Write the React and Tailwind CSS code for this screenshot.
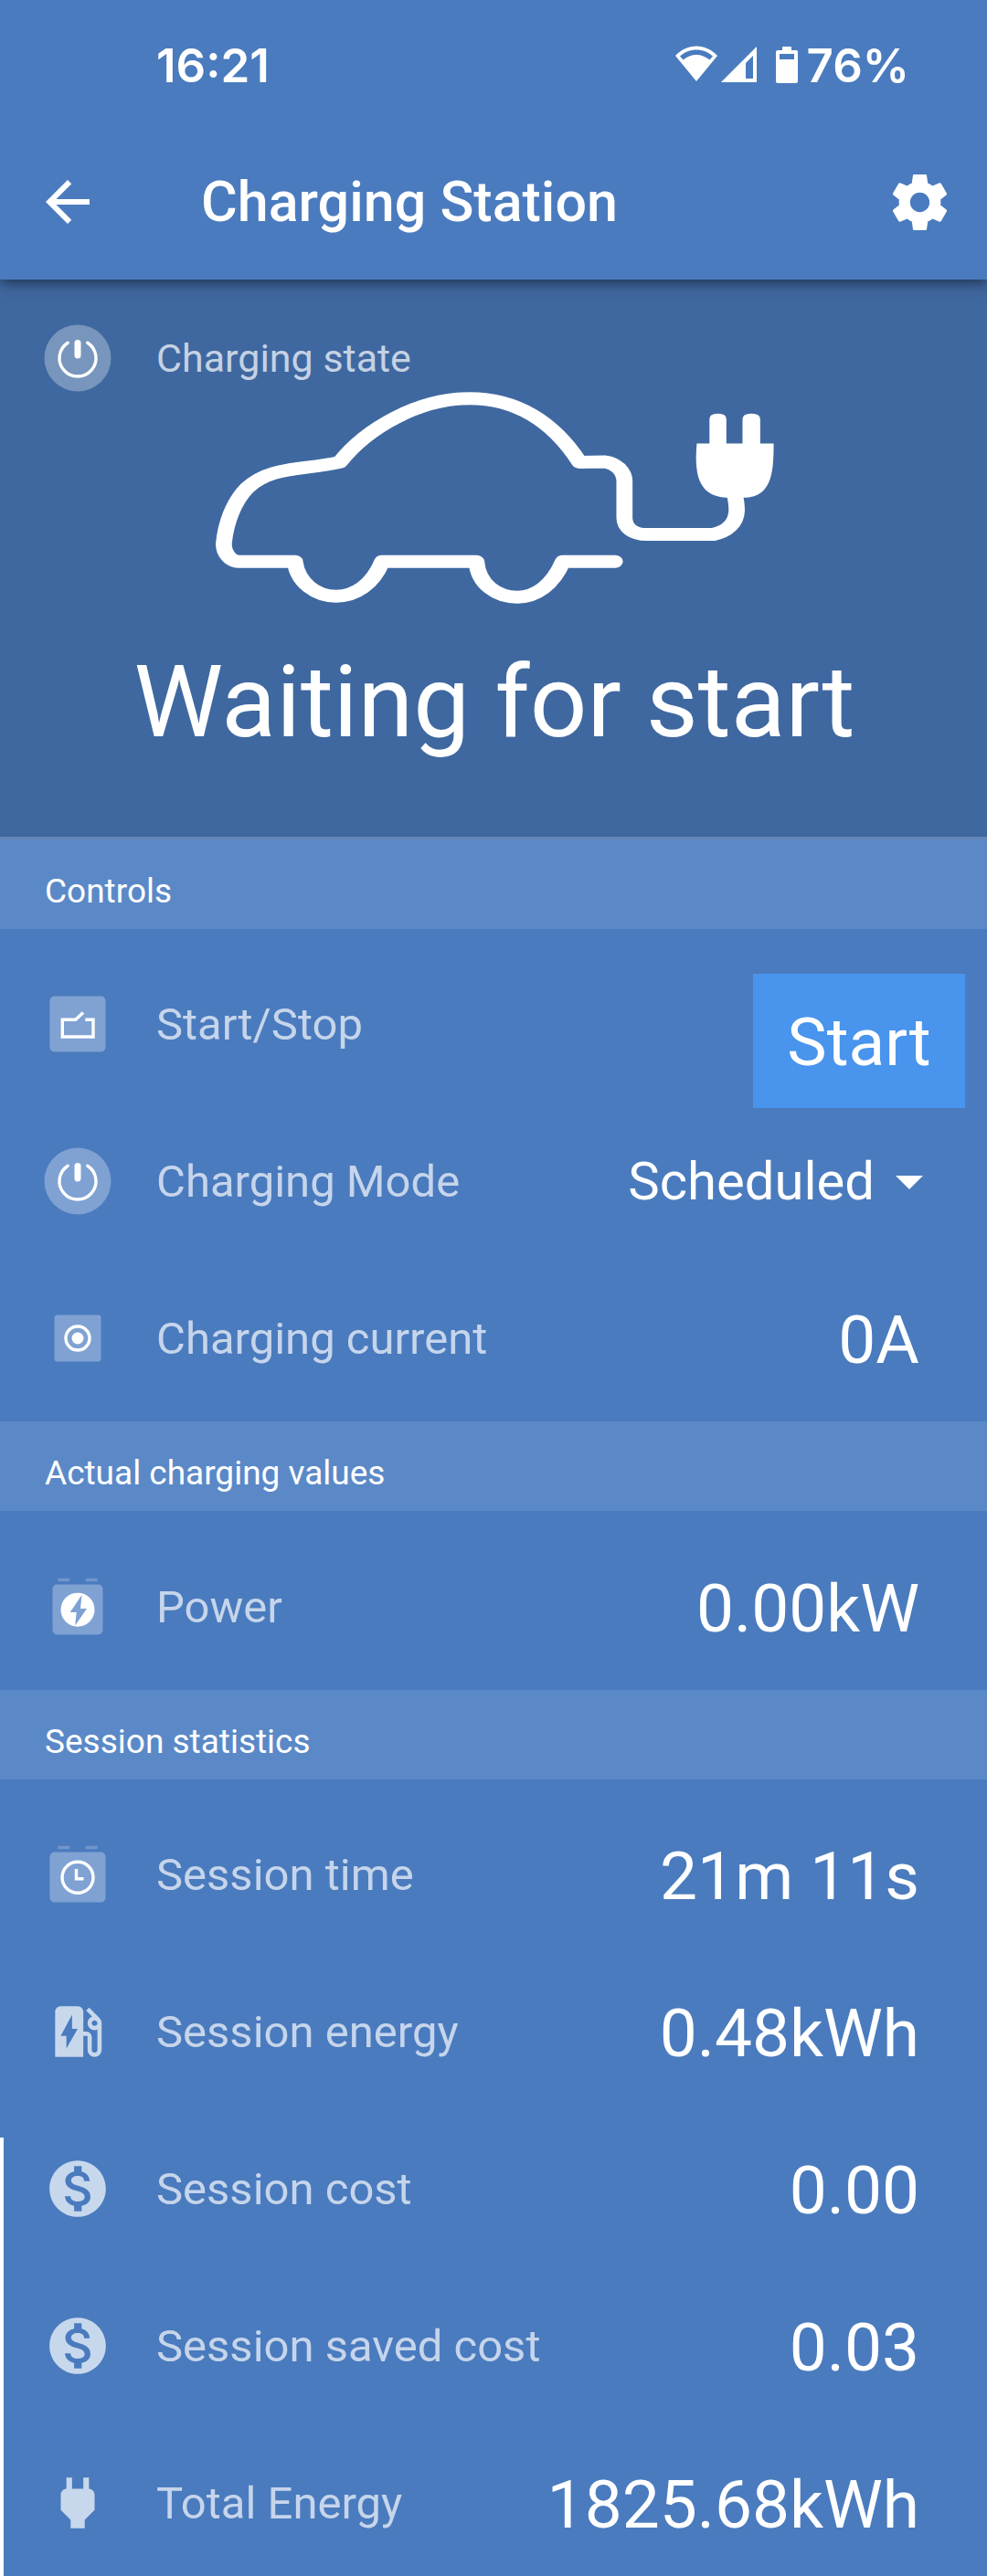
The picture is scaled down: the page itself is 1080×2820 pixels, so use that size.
import React, { useState } from "react";
import {
  MdArrowBack,
  MdArrowDropDown,
  MdEvStation,
  MdMonetizationOn,
  MdPower,
} from "react-icons/md";

const chargingModes = ["Manual", "Auto", "Scheduled"];

const sessionStats = [
  { label: "Session time", value: "21m 11s", icon: "time" },
  { label: "Session energy", value: "0.48kWh", icon: "station" },
  { label: "Session cost", value: "0.00", icon: "cost" },
  { label: "Session saved cost", value: "0.03", icon: "cost" },
  { label: "Total Energy", value: "1825.68kWh", icon: "plug" },
];

export default function App() {
  const [mode, setMode] = useState("Scheduled");
  const [charging, setCharging] = useState(false);

  return (
    <div className="relative h-screen overflow-hidden bg-[#4a7bbe] font-['Roboto',sans-serif] text-white">
      {/* Header */}
      <header className="relative z-10 bg-[#4a7bbe] pb-1 shadow-[0_4px_14px_rgba(0,0,0,0.5)]">
        <StatusBar />
        <div className="flex h-[162px] items-center pr-[37px] pl-[38px]">
          <button aria-label="Back">
            <MdArrowBack size={72} />
          </button>
          <h1 className="ml-[110px] flex-1 text-[61px] leading-none font-medium">Charging Station</h1>
          <button aria-label="Settings">
            <SettingsIcon />
          </button>
        </div>
      </header>

      {/* Charging state */}
      <section className="bg-[#3f68a0] pt-[49px] pb-[92px]">
        <div className="flex items-center pl-12">
          <RowIcon name="state" />
          <span className="ml-[49px] text-[43px] leading-none text-[#c5d2e3]">Charging state</span>
        </div>
        <div className="pl-0.5">
          <CarIcon />
          <p className="mt-[53px] text-center text-[110px] leading-none">
            {charging ? "Charging" : "Waiting for start"}
          </p>
        </div>
      </section>

      {/* Controls */}
      <div className="border-t-[3px] border-[#6486b6]">
        <SectionTitle>Controls</SectionTitle>
      </div>
      <section className="pt-[18px] pb-[5px]">
        <Row icon="switch" label="Start/Stop">
          <button
            onClick={() => setCharging(!charging)}
            className="-mr-[50px] mt-[31px] h-[147px] min-w-[232px] shrink-0 self-start bg-[#4994ec] px-9 pt-1 text-[73px] leading-none"
          >
            {charging ? "Stop" : "Start"}
          </button>
        </Row>
        <Row icon="power" label="Charging Mode" htmlFor="mode">
          <div className="relative -mr-[25px]">
            <select
              id="mode"
              value={mode}
              onChange={(e) => setMode(e.target.value)}
              className="appearance-none bg-transparent pr-[74px] text-right text-[58px] leading-none"
            >
              {chargingModes.map((m) => (
                <option key={m} value={m}>
                  {m}
                </option>
              ))}
            </select>
            <MdArrowDropDown
              size={72}
              className="pointer-events-none absolute top-1/2 right-0 -translate-y-1/2"
            />
          </div>
        </Row>
        <Row icon="current" label="Charging current">
          <Value>0A</Value>
        </Row>
      </section>

      {/* Actual values */}
      <SectionTitle>Actual charging values</SectionTitle>
      <section className="pt-[19px] pb-[5px]">
        <Row icon="battery" label="Power">
          <Value>0.00kW</Value>
        </Row>
      </section>

      {/* Session statistics */}
      <SectionTitle>Session statistics</SectionTitle>
      <section className="pt-[18px] pb-[5px]">
        {sessionStats.map((s) => (
          <Row key={s.label} icon={s.icon} label={s.label}>
            <Value>{s.value}</Value>
          </Row>
        ))}
      </section>

      {/* Edge marker */}
      <div className="absolute bottom-0 left-0 h-120 w-1 bg-white" />
    </div>
  );
}

function StatusBar() {
  return (
    <div className="flex h-35 items-center pt-0.5 pr-[85px] pl-[171px] font-['Inter',sans-serif] text-[51px] leading-none font-semibold">
      <span className="flex-1">16:21</span>
      <svg width="136" height="42" viewBox="0 0 136 42" fill="currentColor">
        <path fillRule="evenodd" d="M0 11C13-3 33-3 46 11L23 39ZM5 11.500L8.500 15.500C17 8 29 8 37.500 15.500L41 11.500C31 2 15 2 5 11.500Z" />
        <path fillRule="evenodd" d="M89 1V40H50ZM85 11L77 19V36H85Z" />
        <path fillRule="evenodd" d="M117 1H127V5H132Q134 5 134 7V39Q134 41 132 41H112Q110 41 110 39V7Q110 5 112 5H117ZM114 9V15H130V9Z" />
      </svg>
      <span className="ml-2">76%</span>
    </div>
  );
}

function SectionTitle({ children }) {
  return (
    <h2 className="flex h-[98px] items-center bg-[#5b89c7] pt-[15px] pl-[49px] text-[37px] leading-none">
      {children}
    </h2>
  );
}

function Row({ icon, label, htmlFor, children }) {
  const Label = htmlFor ? "label" : "span";
  return (
    <div className="flex h-43 items-center pr-[74px] pl-12">
      <RowIcon name={icon} />
      <Label htmlFor={htmlFor} className="ml-[49px] flex-1 text-[49px] leading-none text-[#c6d5eb]">
        {label}
      </Label>
      {children}
    </div>
  );
}

function Value({ children }) {
  return <span className="pt-1 text-[73px] leading-none">{children}</span>;
}

function RowIcon({ name }) {
  if (name === "station") return <MdEvStation size={74} className="shrink-0 text-[#c8d8ec]" />;
  if (name === "cost") return <MdMonetizationOn size={74} className="shrink-0 text-[#c8d8ec]" />;
  if (name === "plug") return <MdPower size={74} className="shrink-0 text-[#c8d8ec]" />;

  return (
    <svg width="74" height="74" viewBox="-37 -37 74 74" fill="none" stroke="white" strokeWidth="3.4" className="shrink-0">
      {(name === "state" || name === "power") && (
        <>
          <circle r="36.500" fill={name === "state" ? "#7896bd" : "#7fa2d3"} stroke="none" />
          <path d="M-10.800-16.800A20 20 0 1 0 10.800-16.800" strokeLinecap="round" />
          <rect x="-3.500" y="-20" width="7" height="20.500" rx="3.500" fill="white" stroke="none" />
        </>
      )}
      {name === "switch" && (
        <>
          <rect x="-30.500" y="-30.500" width="61" height="61" rx="5" fill="#7fa2d3" stroke="none" />
          <path d="M8.300-4.700H17V14H-16.700V-4.700H-2.300L6-12.500" />
        </>
      )}
      {name === "current" && (
        <>
          <rect x="-25.500" y="-25.500" width="51" height="51" rx="3" fill="#7fa2d3" stroke="none" />
          <circle r="13" />
          <circle r="6.500" fill="white" stroke="none" />
        </>
      )}
      {name === "battery" && (
        <>
          <path d="M-21.700-29.500H-8.700M8.700-29.500H21.700" stroke="#6f96cc" />
          <rect x="-27.500" y="-24.500" width="55" height="55" rx="5" fill="#7fa2d3" stroke="none" />
          <circle cy="3.200" r="18.500" fill="white" stroke="none" />
          <path d="M4.500-13L-8.300 6H-1.300L-2.800 20.500L10 2H3Z" fill="#7fa2d3" stroke="none" />
        </>
      )}
      {name === "time" && (
        <>
          <path d="M-21.700-29.500H-8.700M8.700-29.500H21.700" stroke="#6f96cc" />
          <rect x="-30.500" y="-24.500" width="61" height="55" rx="5" fill="#7fa2d3" stroke="none" />
          <circle cy="3.200" r="17" />
          <path d="M-1.500-6V4.700H6.500" />
        </>
      )}
    </svg>
  );
}

function CarIcon() {
  return (
    <svg
      width="611"
      height="232"
      viewBox="62 56 1452 697"
      preserveAspectRatio="none"
      className="mx-auto block"
      fill="none"
      stroke="white"
      strokeWidth="42"
      strokeLinejoin="round"
    >
      <path
        strokeLinecap="round"
        d="M1100 614H965C938 692 894 731 846 731C794 731 745 690 740 614H495C470 690 425 728 375 728C325 728 275 685 268 614H122C100 614 83 585 83 556C88 490 107 420 143 373C203 300 285 315 385 287C455 175 590 78 722 78C845 78 940 155 1008 287L1075 286C1100 290 1125 315 1125 350V470C1125 505 1150 525 1183 525H1355C1390 516 1416 490 1417 445Q1417 425 1413 400"
      />
      <path
        fill="white"
        stroke="none"
        d="M1313 226H1346V146Q1346 127 1368 127Q1390 127 1390 146V226H1432V146Q1432 127 1455 127Q1478 127 1478 146V226H1513C1513 320 1508 404 1435 404H1390C1318 398 1306 330 1313 226Z"
      />
    </svg>
  );
}

function SettingsIcon() {
  return (
    <svg width="73" height="73" viewBox="0 0 24 24" fill="currentColor">
      <path d="M19.430 12.980c.04-.32.07-.64.07-.98s-.03-.66-.07-.98l2.110-1.650c.19-.15.24-.42.12-.64l-2-3.460c-.12-.22-.39-.3-.61-.22l-2.490 1c-.52-.4-1.080-.73-1.690-.98l-.38-2.650C14.460 2.180 14.250 2 14 2h-4c-.25 0-.46.18-.49.42l-.38 2.650c-.61.25-1.170.59-1.690.98l-2.490-1c-.23-.09-.49 0-.61.22l-2 3.460c-.13.22-.07.49.12.64l2.110 1.650c-.04.32-.07.65-.07.98s.03.66.07.98l-2.110 1.650c-.19.15-.24.42-.12.64l2 3.460c.12.22.39.3.61.22l2.490-1c.52.4 1.080.73 1.690.98l.38 2.650c.03.24.24.42.49.42h4c.25 0 .46-.18.49-.42l.38-2.650c.61-.25 1.170-.59 1.690-.98l2.490 1c.23.09.49 0 .61-.22l2-3.460c.12-.22.07-.49-.12-.64l-2.110-1.650zM12 15.500c-1.930 0-3.500-1.570-3.500-3.500s1.570-3.500 3.500-3.500 3.500 1.570 3.500 3.500-1.570 3.500-3.500 3.500z" />
    </svg>
  );
}
